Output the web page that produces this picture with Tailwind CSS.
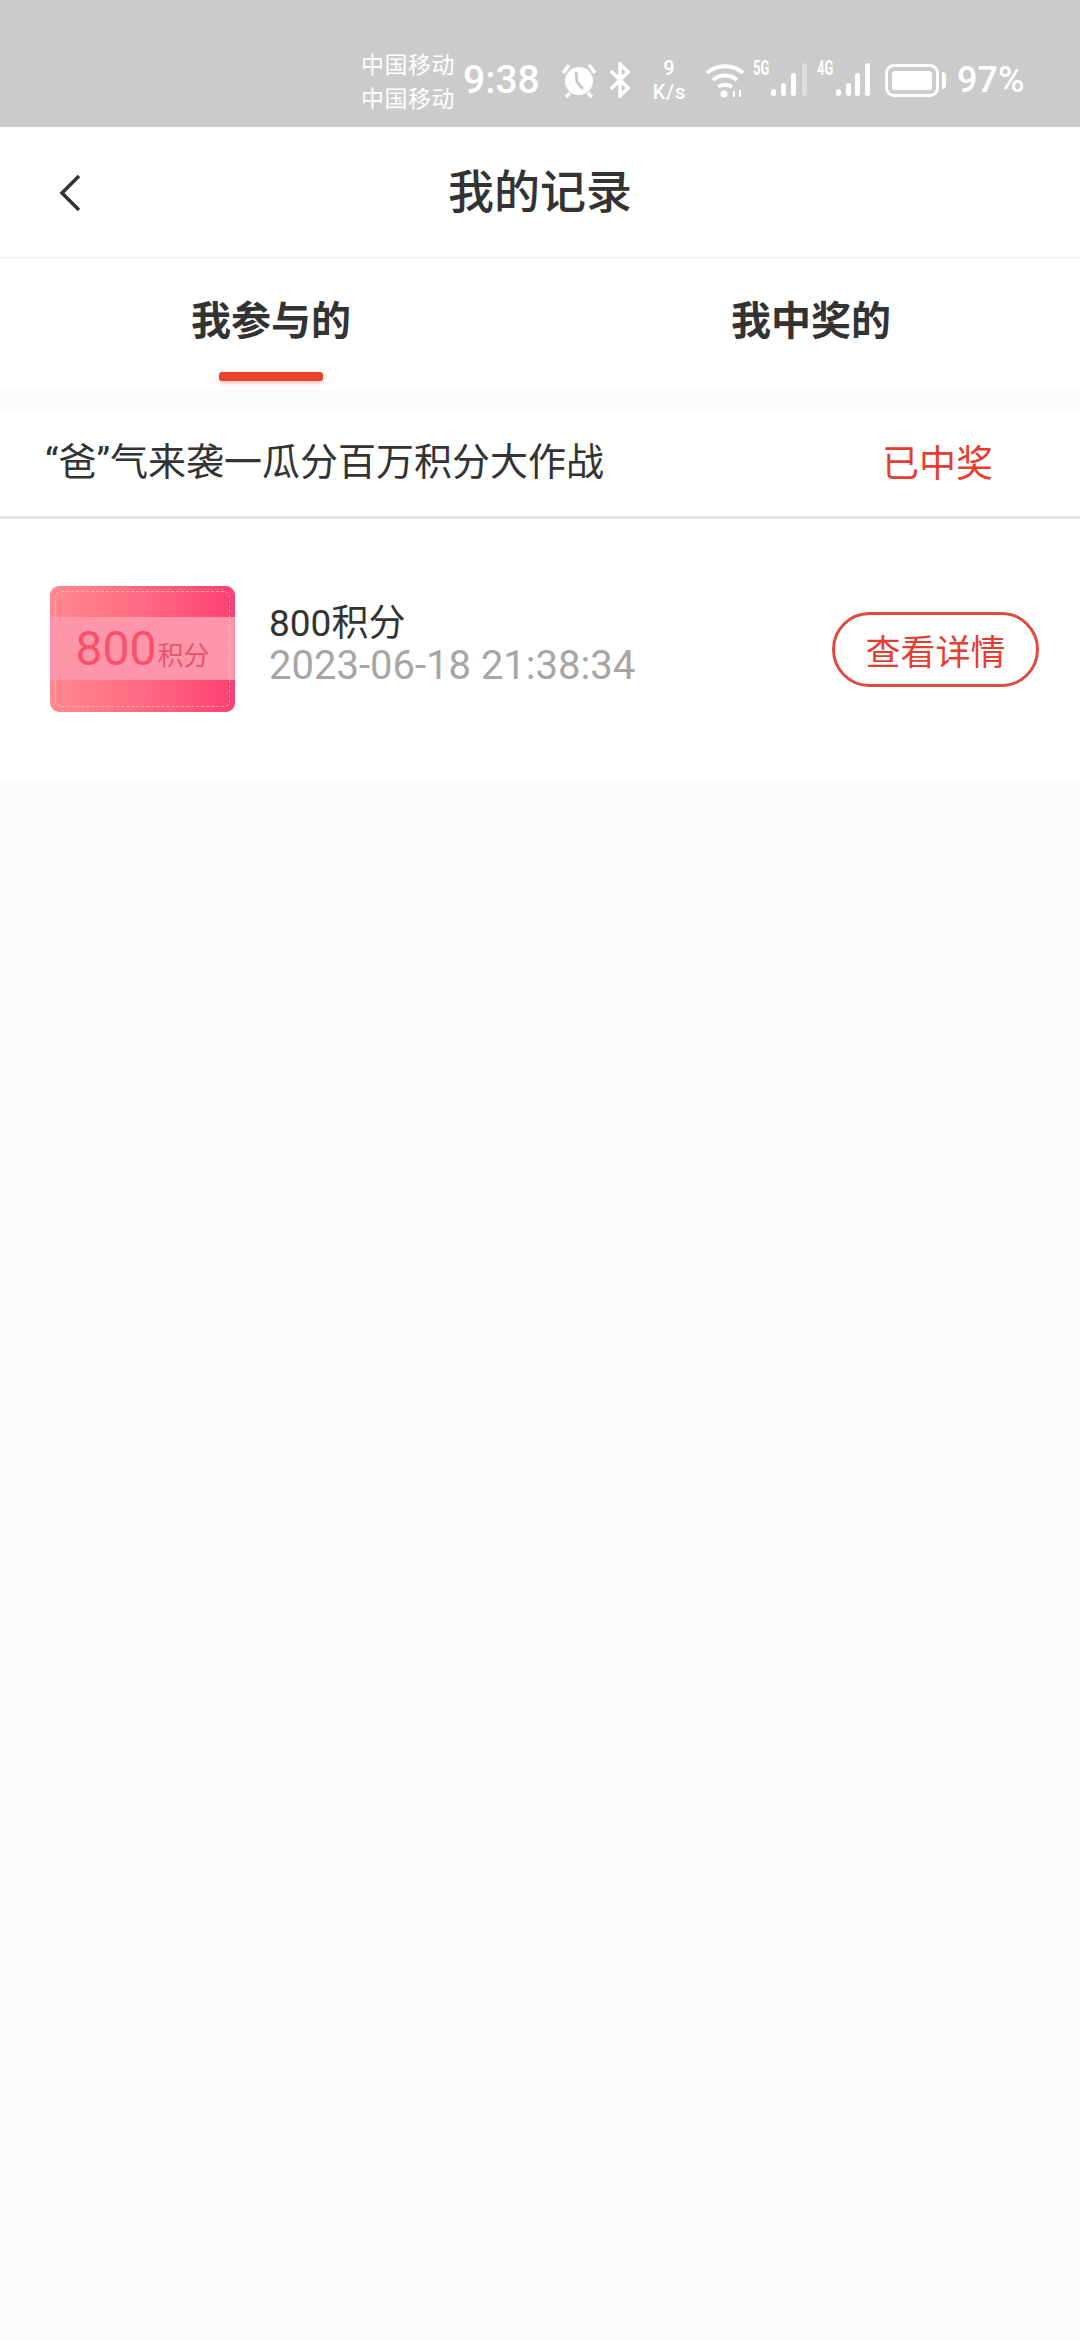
<!DOCTYPE html>
<html><head><meta charset="utf-8"><script src="https://cdn.jsdelivr.net/npm/@tailwindcss/browser@4"></script></head>
<body class="m-0">
<div class="w-[1080px] h-[2340px] bg-[#fbfbfb] flex flex-col font-['Noto_Sans_CJK_SC','Noto_Sans',sans-serif] overflow-hidden">
  <div class="h-[127px] bg-[#cbcbcb] flex items-center pl-[361px] pt-[33px] text-white shrink-0">
    <div class="flex flex-col w-[96px] text-[23px] tracking-[0.5px] leading-[34px] font-normal"><span class="whitespace-nowrap">中国移动</span><span class="whitespace-nowrap">中国移动</span></div>
    <span class="font-['Roboto'] font-medium text-[39px] leading-none w-[80px] ml-[6px]">9:38</span>
    <svg class="ml-[18px]" width="36" height="36" viewBox="0 0 36 36" fill="none"><circle cx="18" cy="19" r="14" fill="#fff"/><path d="M15 10l1 10 6 7" stroke="#cbcbcb" stroke-width="3"/><path d="M2 11l6-8M34 11l-6-8M5 35l4-4M31 35l-4-4" stroke="#fff" stroke-width="3.500"/></svg>
    <svg class="ml-[12px]" width="22" height="36" viewBox="0 0 22 36" fill="none"><path d="M2 9l17 17-8 8V2l8 8L2 27" stroke="#fff" stroke-width="3.500"/></svg>
    <div class="ml-[20px] w-[37px] flex flex-col items-center font-['Roboto'] font-medium text-[20px] tracking-[1px] leading-[24px]"><span>9</span><span>K/s</span></div>
    <svg class="ml-[17px]" width="40" height="36" viewBox="0 0 40 36" fill="none"><path d="M2 11c10-9 26-9 36 0M8 18c7-6 17-6 24 0M13 25c4-3 10-3 14 0" stroke="#fff" stroke-width="4"/><circle cx="19" cy="32" r="3.500" fill="#fff"/><path d="M29 35v-6M35 28v7" stroke="#fff" stroke-width="2"/></svg>
    <div class="ml-[8px] relative w-[54px] h-[36px]">
      <span class="absolute left-0 top-[-3px] font-['Roboto'] font-bold text-[20px] leading-[18px] scale-x-[0.65] origin-left">5G</span>
      <svg class="absolute left-[18px] top-0" width="36" height="36" viewBox="0 0 36 36"><rect x="0" y="27" width="5" height="7" rx="2.500" fill="#fff"/><rect x="10" y="21" width="5" height="13" rx="2.500" fill="#fff"/><rect x="20" y="11" width="5" height="23" rx="2.500" fill="#fff"/><rect x="31" y="1" width="5" height="33" rx="2.500" fill="#fff" fill-opacity=".35"/></svg>
    </div>
    <div class="ml-[10px] relative w-[52px] h-[36px]">
      <span class="absolute left-0 top-[-3px] font-['Roboto'] font-bold text-[20px] leading-[18px] scale-x-[0.65] origin-left">4G</span>
      <svg class="absolute left-[19px] top-0" width="34" height="36" viewBox="0 0 34 36"><rect x="0" y="27" width="5" height="7" rx="2.500" fill="#fff"/><rect x="10" y="21" width="5" height="13" rx="2.500" fill="#fff"/><rect x="19" y="11" width="5" height="23" rx="2.500" fill="#fff"/><rect x="29" y="1" width="5" height="33" rx="2.500" fill="#fff"/></svg>
    </div>
    <div class="ml-[16px] w-[54px] h-[33px] border-[3px] border-white rounded-[9px] p-[4px] shrink-0"><div class="w-full h-full bg-white rounded-[3px]"></div></div>
    <div class="ml-[3px] w-[4px] h-[17px] bg-white rounded-r-sm"></div>
    <span class="ml-[11px] font-['Roboto'] font-medium text-[36px] leading-none">97%</span>
  </div>
  <div class="relative h-[130px] bg-white border-b border-[#ececec] flex items-center justify-center shrink-0 box-content">
    <svg class="absolute left-[58px] top-[47px]" width="24" height="38" viewBox="0 0 24 38" fill="none"><path d="M21 2L4 19l17 17" stroke="#333" stroke-width="3.500" stroke-linejoin="miter"/></svg>
    <span class="text-[46px] leading-none font-medium text-[#333] -mt-[8px]">我的记录</span>
  </div>
  <div class="h-[132px] bg-white flex shrink-0">
    <div class="relative w-[542px] flex justify-center pt-[36px]">
      <span class="text-[40px] leading-[48px] font-bold text-[#333]">我参与的</span>
      <div class="absolute left-[219px] top-[114px] w-[104px] h-[9px] rounded-[3px] bg-[#e8432f] shadow-[0_2px_4px_rgba(232,67,47,0.35)]"></div>
    </div>
    <div class="w-[538px] flex justify-center pt-[36px]">
      <span class="text-[40px] leading-[48px] font-bold text-[#333]">我中奖的</span>
    </div>
  </div>
  <div class="h-[23px] shrink-0"></div>
  <div class="h-[106px] bg-white border-b-[3px] border-[#e3e3e3] flex items-center justify-between pl-[45px] pr-[87px] shrink-0">
    <span class="text-[38px] leading-none text-[#333] -mt-[6px] font-['Roboto','Noto_Sans_CJK_SC',sans-serif]">“爸”气来袭一瓜分百万积分大作战</span>
    <span class="text-[37px] leading-none text-[#e63d30] -mt-[7px]">已中奖</span>
  </div>
  <div class="h-[261px] bg-white flex items-center pl-[50px] pr-[41px] pb-[1px] shrink-0">
    <div class="relative w-[185px] h-[126px] rounded-[9px] bg-gradient-to-r from-[#ff8a90] to-[#ff3e72] flex items-center justify-center overflow-hidden shrink-0">
      <div class="absolute left-0 right-0 top-[31px] h-[63px] bg-[#ff95a9]"></div>
      <div class="absolute inset-[5px] border border-dashed border-[#ffc09a]/80 rounded-[6px]"></div>
      <div class="relative flex items-baseline">
        <span class="font-['Roboto'] text-[48px] leading-none text-[#f7516b]">800</span>
        <span class="text-[26px] leading-none text-[#e5566e] ml-[1px]">积分</span>
      </div>
    </div>
    <div class="ml-[34px] flex flex-col flex-1 mb-[9px]">
      <span class="text-[37px] leading-[42px] text-[#333] font-['Roboto','Noto_Sans_CJK_SC',sans-serif]">800积分</span>
      <span class="text-[40px] leading-[42px] text-[#a6a6a6] font-['Roboto']">2023-06-18 21:38:34</span>
    </div>
    <div class="w-[207px] h-[75px] rounded-full border-[3px] border-[#e04a3c] flex items-center justify-center text-[35px] leading-none text-[#e63d30] shrink-0">查看详情</div>
  </div>
  <div class="flex-1"></div>
</div>
</body></html>
